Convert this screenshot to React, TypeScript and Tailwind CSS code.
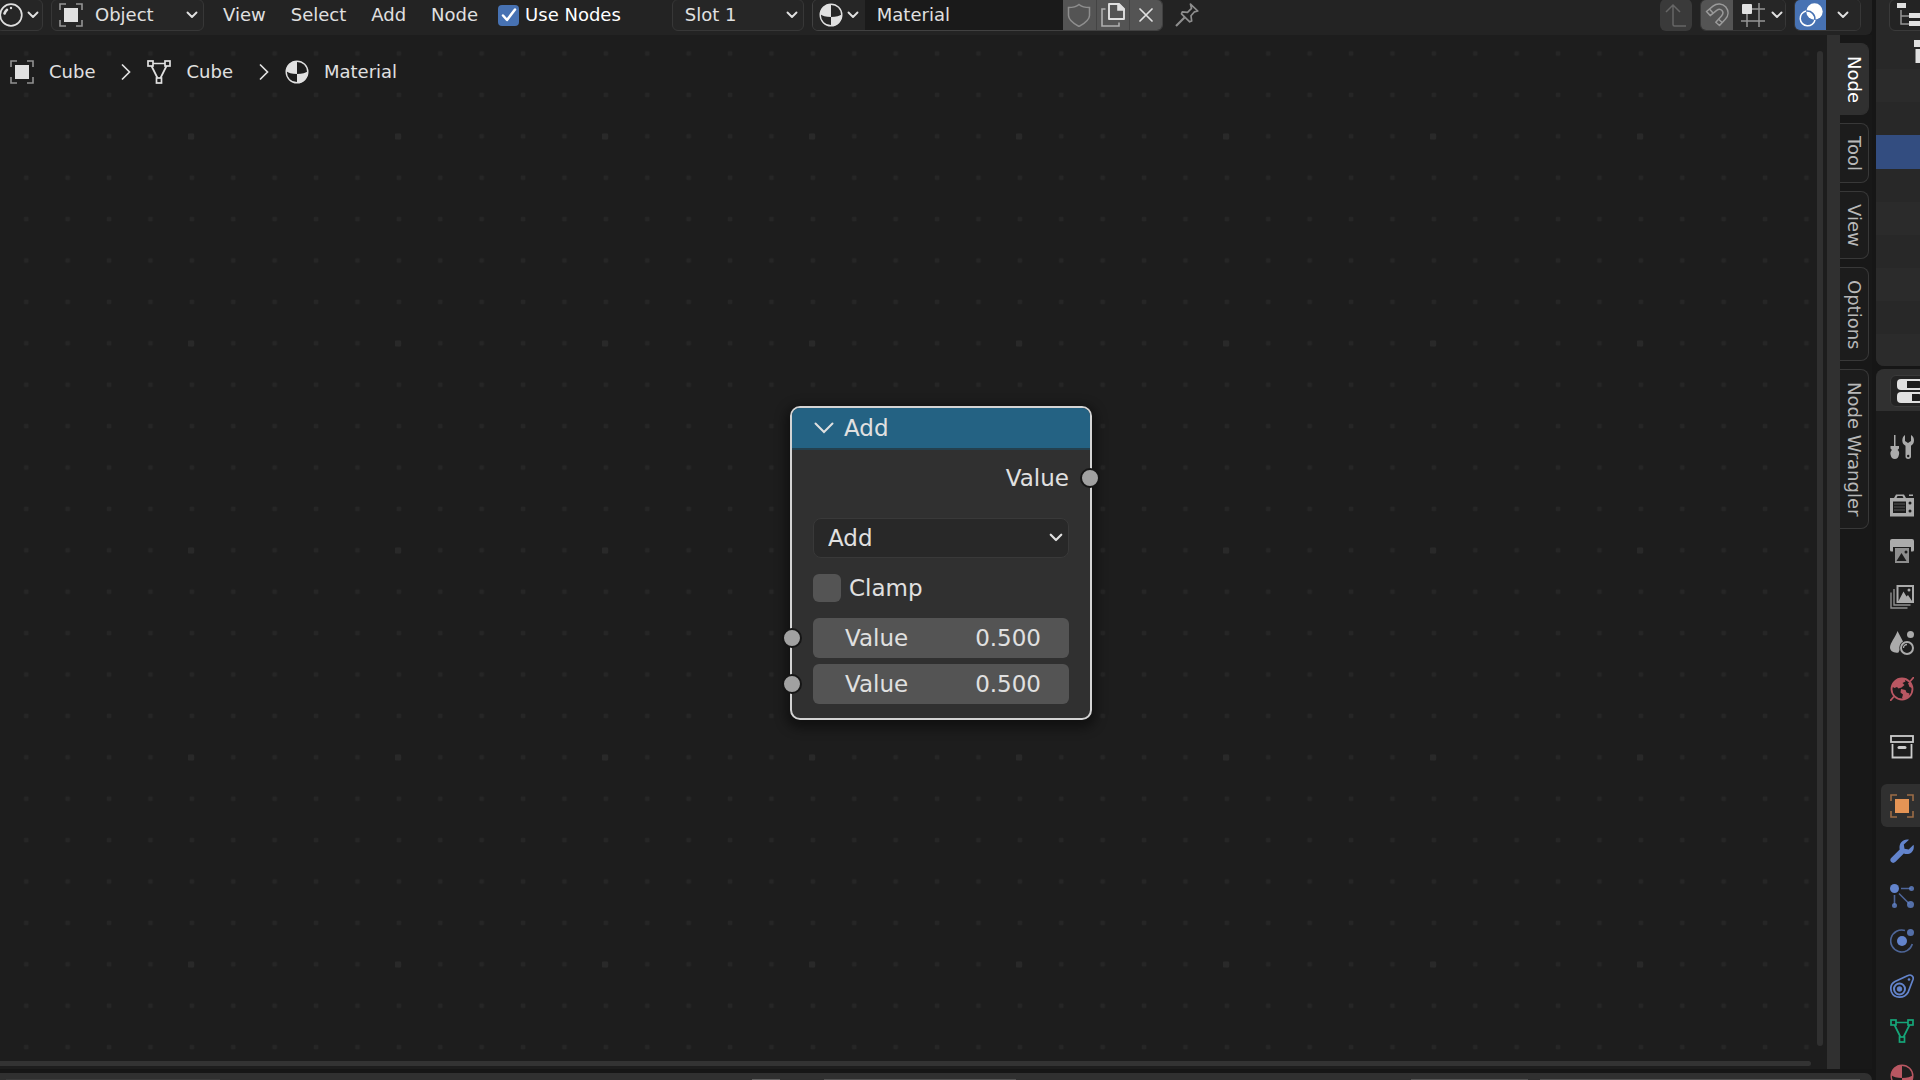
import React from 'react';

type IconProps = { className?: string };

const ObjectIcon: React.FC<IconProps> = ({ className = 'size-6' }) => (
  <svg viewBox="0 0 24 24" className={className} fill="none" aria-hidden="true">
    <path d="M1 7V1h6M17 1h6v6M23 17v6h-6M7 23H1v-6" stroke="currentColor" strokeWidth="1.6" opacity="0.6" />
    <rect x="5" y="5" width="14" height="14" fill="currentColor" />
  </svg>
);

const MeshIcon: React.FC<IconProps> = ({ className = 'size-6' }) => (
  <svg viewBox="0 0 24 24" className={className} fill="none" stroke="currentColor" strokeWidth="1.7" aria-hidden="true">
    <rect x="1" y="1" width="5" height="5" />
    <rect x="18" y="1" width="5" height="5" />
    <rect x="9.5" y="18" width="5" height="5" />
    <path d="M6 3.5h12M4.5 6l6 12M19.5 6l-6 12" />
  </svg>
);

const MaterialIcon: React.FC<IconProps> = ({ className = 'size-6' }) => (
  <svg viewBox="0 0 24 24" className={className} aria-hidden="true">
    <circle cx="12" cy="12" r="10.8" fill="none" stroke="currentColor" strokeWidth="1.4" />
    <path d="M12 1v13C7 14 3 13 1 11A11 11 0 0 1 12 1Z" fill="currentColor" />
    <path d="M12 23v-9c5 0 9-1 11-3A11 11 0 0 1 12 23Z" fill="currentColor" />
  </svg>
);

const ShaderIcon: React.FC<IconProps> = ({ className = 'size-6' }) => (
  <svg viewBox="0 0 24 24" className={className} fill="none" stroke="currentColor" strokeLinecap="round" aria-hidden="true">
    <circle cx="12" cy="12" r="10.8" strokeWidth="1.7" />
    <path d="M5.5 10.5c.5-1.500 1.300-2.700 2.500-3.700" strokeWidth="2.600" />
    <circle cx="12" cy="5" r="1.200" fill="currentColor" stroke="none" />
  </svg>
);

const ChevronDown: React.FC<IconProps> = ({ className = 'w-3' }) => (
  <svg viewBox="0 0 12 8" className={className} fill="none" aria-hidden="true">
    <path d="M1.500 1.500 6 6l4.500-4.500" stroke="currentColor" strokeWidth="1.900" strokeLinecap="round" strokeLinejoin="round" />
  </svg>
);

const ChevronRight: React.FC = () => (
  <svg viewBox="0 0 10 16" className="w-2.5 shrink-0" fill="none" aria-hidden="true">
    <path d="m1.500 1 7 7-7 7" stroke="currentColor" strokeWidth="1.700" strokeLinecap="round" />
  </svg>
);

const ShieldIcon: React.FC = () => (
  <svg viewBox="0 0 24 24" className="size-6" fill="none" stroke="currentColor" strokeWidth="1.500" aria-hidden="true">
    <path d="M12 1.500C9.500 3.500 6 4.500 1.500 4.500v8c0 4.500 5 8 10.500 11 5.500-3 10.500-6.500 10.500-11v-8C18 4.500 14.500 3.500 12 1.500Z" />
  </svg>
);

const DuplicateIcon: React.FC = () => (
  <svg viewBox="0 0 24 24" className="size-6" fill="none" stroke="currentColor" strokeWidth="1.600" aria-hidden="true">
    <path d="M4.500 6H1v17h17v-3.500" opacity="0.65" />
    <path d="M8 1h10l5 5v10H8Z" strokeLinejoin="round" strokeWidth="1.900" />
    <path d="M17 .5V7h6.500Z" fill="currentColor" />
  </svg>
);

const CloseIcon: React.FC = () => (
  <svg viewBox="0 0 14 14" className="size-3.5" fill="none" stroke="currentColor" strokeWidth="1.700" strokeLinecap="round" aria-hidden="true">
    <path d="m1 1 12 12M13 1 1 13" />
  </svg>
);

const PinIcon: React.FC = () => (
  <svg viewBox="0 0 24 24" className="size-6" fill="none" stroke="currentColor" strokeWidth="1.700" strokeLinejoin="round" aria-hidden="true">
    <path d="M15.500 1.200 22.800 8l-3.300.8-3.500 4 .7 5.200-2 .8-8.200-8 .8-2 5.200.5 4-4Z" />
    <path d="m9.500 14.500-8.500 8.500" strokeWidth="2.200" />
  </svg>
);

const ParentIcon: React.FC = () => (
  <svg viewBox="0 0 24 24" className="size-6" fill="none" stroke="currentColor" strokeWidth="1.500" aria-hidden="true">
    <path d="M2 9l7-7 7 7M9 2v19.500q0 1.500 1.500 1.500H22" />
  </svg>
);

const MagnetIcon: React.FC = () => (
  <svg viewBox="0 0 24 24" className="size-6" fill="none" stroke="currentColor" strokeWidth="1.500" strokeLinejoin="round" aria-hidden="true">
    <path d="M1.500 8.500 8 3.200C12 0 17.500.5 20.800 4c3.200 4 2.700 8.800-.5 12.300l-5.800 6.200-3.700-3.300 5.700-6.200c1.800-2 1.800-4 .5-5.500-1.400-1.500-3.500-1.500-5.300-.1l-6.500 5.200Z" />
    <path d="m4.500 6 3.500 4M13.500 16.200l3.700 3.300" />
  </svg>
);

const GridSnapIcon: React.FC = () => (
  <svg viewBox="0 0 24 24" className="size-6" fill="none" aria-hidden="true">
    <path d="M10 6h14M0 18h24M6 10v14M18 0v24" stroke="currentColor" strokeWidth="1.500" opacity="0.6" />
    <rect x="1" y="1" width="10" height="10" rx="1" fill="currentColor" />
  </svg>
);

const OverlayIcon: React.FC = () => (
  <svg viewBox="0 0 24 24" className="size-6" aria-hidden="true">
    <circle cx="15.500" cy="8.500" r="8.200" fill="currentColor" />
    <path d="M7 8a7.500 7.500 0 1 0 9 9" fill="none" stroke="currentColor" strokeWidth="1.500" />
    <path d="M7.200 8.200a7.600 7.600 0 0 1 8.600 8.600" fill="none" stroke="#4772b3" strokeWidth="1.500" />
  </svg>
);

const TreeIcon: React.FC = () => (
  <svg viewBox="0 0 24 24" className="size-6 shrink-0" aria-hidden="true">
    <path d="M4 7v14h8M4 13h8" fill="none" stroke="currentColor" strokeWidth="1.500" opacity="0.6" />
    <path d="M0 0h9v5H0ZM12 10h12v5H12ZM12 18h12v5H12Z" fill="currentColor" />
  </svg>
);

const CollectionIcon: React.FC<IconProps> = ({ className = 'size-6' }) => (
  <svg viewBox="0 0 24 24" className={className} fill="none" stroke="currentColor" strokeWidth="1.800" aria-hidden="true">
    <rect x="1" y="1" width="22" height="6" />
    <path d="M2.500 9v13.500h19V9" />
    <path d="M9 12.500h6" strokeWidth="3" strokeLinecap="round" />
  </svg>
);

const SceneCollectionIcon: React.FC = () => (
  <svg viewBox="0 0 24 24" className="size-6 shrink-0" fill="currentColor" aria-hidden="true">
    <path d="M0 0h24v7H0ZM1.500 9h21v14h-21Z" />
  </svg>
);

const PropertiesIcon: React.FC = () => (
  <svg viewBox="0 0 26 26" className="size-[26px] shrink-0" aria-hidden="true">
    <rect x="0" y="1" width="26" height="11" rx="4" fill="currentColor" />
    <rect x="0" y="14" width="26" height="11" rx="4" fill="currentColor" />
    <path d="M10 3h12q2 0 2 2v3q0 2-2 2H10ZM15 16h7q2 0 2 2v3q0 2-2 2h-7Z" fill="#1d1d1d" />
  </svg>
);

const ToolIcon: React.FC = () => (
  <svg viewBox="0 0 24 24" className="size-6" fill="currentColor" aria-hidden="true">
    <path d="M4 0h1.500v11H9v2.500L7.500 15c1.500 1 2 2.500 1.500 4.500C8.500 22.500 7 24 4.800 24S1 22.500.5 19.500C0 17.500.8 16 2 15L.5 13.500V11H4Z" />
    <path d="M15 0v6l3 2 3-2V0c2 1 3 3 3 5.500 0 2.500-1.300 4.200-3 5.200V21.500c0 1.500-1 2.500-2.800 2.500S15.500 23 15.500 21.500V10.700C13.500 9.700 12.300 8 12.300 5.500 12.300 3 13.300 1 15 0Z" />
    <circle cx="18.200" cy="21" r="1.200" fill="#1d1d1d" />
  </svg>
);

const RenderIcon: React.FC = () => (
  <svg viewBox="0 0 24 24" className="size-6" aria-hidden="true">
    <path d="M4 5l2-3.500h8L16 5h8v18.500H0V5Z" fill="currentColor" />
    <path d="M7.500 3h5L13.500 5h-7ZM3 8.500h13v11.500H3Z" fill="#1d1d1d" />
    <path d="M4 11h11M4 14h11M4 17h11" stroke="currentColor" strokeWidth="0.800" opacity="0.5" />
    <path d="M19 1.500h4v1.500h-4Z" fill="currentColor" />
    <circle cx="20" cy="10" r="1.500" fill="#1d1d1d" />
    <circle cx="20" cy="18" r="1.500" fill="#1d1d1d" />
  </svg>
);

const OutputIcon: React.FC = () => (
  <svg viewBox="0 0 24 24" className="size-6" aria-hidden="true">
    <path d="M2 0h20q2 0 2 2v9q0 1.500-1.500 1.500H21V8H3v4.500H1.500Q0 12.500 0 11V2Q0 0 2 0Z" fill="currentColor" />
    <path d="M5 9h14v15H5Z" fill="currentColor" opacity="0.8" />
    <path d="m6.500 22 5-8 5 8Z" fill="#1d1d1d" />
    <circle cx="16" cy="13" r="1.500" fill="#1d1d1d" />
  </svg>
);

const ViewLayerIcon: React.FC = () => (
  <svg viewBox="0 0 24 24" className="size-6" fill="none" stroke="currentColor" aria-hidden="true">
    <rect x="7.500" y="1" width="15.500" height="16" strokeWidth="2" />
    <path d="M4 4v16h16.500M1 7.500V23h16.500" strokeWidth="1.400" opacity="0.800" />
    <path d="m8.500 16 5-9.500 3 5 1.500-1.500 4 6Z" fill="currentColor" stroke="none" />
    <circle cx="19" cy="5" r="1.500" fill="currentColor" stroke="none" />
  </svg>
);

const SceneIcon: React.FC = () => (
  <svg viewBox="0 0 24 24" className="size-6" fill="currentColor" aria-hidden="true">
    <path d="M7.500 0 13 10.500C10 12.500 9 15 9.500 19L8.500 21.500C4 22.500 0 20 0 16.500 0 12 5.500 6 7.500 0Z" />
    <circle cx="20.500" cy="3.500" r="3.500" />
    <circle cx="17" cy="17" r="6" fill="none" stroke="currentColor" strokeWidth="2" />
    <path d="M13.500 17a3.500 3.500 0 0 1 3.500-3.500" fill="none" stroke="currentColor" strokeWidth="1.300" />
  </svg>
);

const WorldIcon: React.FC = () => (
  <svg viewBox="0 0 24 24" className="size-6" aria-hidden="true">
    <circle cx="12" cy="12" r="10.500" fill="none" stroke="currentColor" strokeWidth="1.800" />
    <path d="M3 6C6 2 11 1.200 14.500 2l1 2.500-3 1.500 2 2-3 2.500-3 1-1.500-1.500L4.500 11 2 9.500ZM11 12l4.500 1 1 2.500 3 1-1 3.500-4.500 2.500-2-1.500 1-3.500-2.500-2ZM18 6l3-1 1.500 6-3-1Z" fill="currentColor" />
    <path d="m0 24 4-4.500M20 4.500 24 0" stroke="currentColor" strokeWidth="1.800" />
  </svg>
);

const WrenchIcon: React.FC = () => (
  <svg viewBox="0 0 24 24" className="size-6" fill="currentColor" aria-hidden="true">
    <path d="M19 .8 13.800 5.500l.7 4.200 4.200.7L23.500 5.800c1.200 4-1 8.700-5.500 9.200-1.500.2-3-.1-4.200-.6L5.500 22.800c-1.500 1.500-3.200 1.400-4.300.3-1.300-1.200-1.200-3 .2-4.300L9.700 10.500C8.500 5 12.500-.5 19 .8Z" />
  </svg>
);

const ParticlesIcon: React.FC = () => (
  <svg viewBox="0 0 24 24" className="size-6" fill="currentColor" aria-hidden="true">
    <path d="M11 4.500h10M4.500 11v10M9 9.500l10.500 10.500" stroke="currentColor" strokeWidth="1.600" opacity="0.7" />
    <circle cx="4.500" cy="4.500" r="4.500" />
    <circle cx="21.500" cy="4.500" r="2.500" opacity="0.8" />
    <circle cx="4.500" cy="21.500" r="2.500" opacity="0.8" />
    <circle cx="20.500" cy="20.500" r="3.500" opacity="0.8" />
  </svg>
);

const PhysicsIcon: React.FC = () => (
  <svg viewBox="0 0 24 24" className="size-6" aria-hidden="true">
    <path d="M15 1.500A11 11 0 1 0 22.300 15" fill="none" stroke="currentColor" strokeWidth="1.600" opacity="0.7" />
    <circle cx="12" cy="12" r="5" fill="currentColor" />
    <circle cx="20.500" cy="3.500" r="3.500" fill="currentColor" opacity="0.8" />
  </svg>
);

const ConstraintIcon: React.FC = () => (
  <svg viewBox="0 0 24 24" className="size-6" fill="none" stroke="currentColor" aria-hidden="true">
    <path d="M18 1.500c3-1.500 6 1 5 4L18 18.500C14 25 4 24.500 1.500 18 0 13.500 1.500 9.500 5 7.500Z" strokeWidth="1.700" />
    <circle cx="9.500" cy="15" r="5.500" strokeWidth="2" />
    <circle cx="9.500" cy="15" r="2.300" fill="currentColor" />
    <circle cx="19" cy="5.500" r="1.300" fill="currentColor" stroke="none" />
  </svg>
);

const breadcrumbs = [
  { label: 'Cube', Icon: ObjectIcon },
  { label: 'Cube', Icon: MeshIcon },
  { label: 'Material', Icon: MaterialIcon },
];

const sidebarTabs = ['Node', 'Tool', 'View', 'Options', 'Node Wrangler'];

const sceneTabs = [
  { label: 'Render', Icon: RenderIcon, color: 'text-[#ababab]' },
  { label: 'Output', Icon: OutputIcon, color: 'text-[#ababab]' },
  { label: 'View Layer', Icon: ViewLayerIcon, color: 'text-[#ababab]' },
  { label: 'Scene', Icon: SceneIcon, color: 'text-[#ababab]' },
  { label: 'World', Icon: WorldIcon, color: 'text-[#b95762]' },
];

const objectTabs = [
  { label: 'Object', Icon: ObjectIcon, color: 'text-[#e59455]' },
  { label: 'Modifiers', Icon: WrenchIcon, color: 'text-[#6384cc]' },
  { label: 'Particles', Icon: ParticlesIcon, color: 'text-[#6384cc]' },
  { label: 'Physics', Icon: PhysicsIcon, color: 'text-[#6384cc]' },
  { label: 'Constraints', Icon: ConstraintIcon, color: 'text-[#6384cc]' },
  { label: 'Data', Icon: MeshIcon, color: 'text-[#16a679]' },
  { label: 'Material', Icon: MaterialIcon, color: 'text-[#b95762]' },
];

const EditorHeader: React.FC = () => (
  <header className="flex h-[35px] shrink-0 items-start overflow-hidden rounded-br-md bg-[#232323] pr-[11px]">
    <button aria-label="Editor type" className="-mt-px -ml-1 flex h-8 w-[47px] shrink-0 items-center gap-1 rounded-md border border-[#373737] bg-[#262626] pl-0.5">
      <ShaderIcon className="size-6 shrink-0" />
      <ChevronDown />
    </button>
    <div className="relative -mt-px ml-2 flex items-center">
      <ObjectIcon className="pointer-events-none absolute left-2 size-6" />
      <select aria-label="Shader type" className="h-8 w-[153px] appearance-none rounded-md border border-[#373737] bg-[#262626] pl-[43px]">
        <option>Object</option>
      </select>
      <ChevronDown className="pointer-events-none absolute right-1.5 w-3" />
    </div>
    <nav className="ml-[7px] flex h-[30px] gap-px">
      {['View', 'Select', 'Add', 'Node'].map((item) => (
        <button key={item} className="px-3">{item}</button>
      ))}
    </nav>
    <label className="ml-2 flex h-[30px] items-center gap-1.5 whitespace-nowrap text-white">
      <span className="relative flex items-center justify-center">
        <input type="checkbox" defaultChecked className="peer size-[21px] appearance-none rounded bg-[#545454] checked:bg-[#4772b3]" />
        <svg viewBox="0 0 16 16" className="pointer-events-none absolute size-4 opacity-0 peer-checked:opacity-100" fill="none" aria-hidden="true">
          <path d="m2 8.500 4 4.500 8-10.500" stroke="white" strokeWidth="2.500" strokeLinecap="round" strokeLinejoin="round" />
        </svg>
      </span>
      Use Nodes
    </label>
    <div className="relative -mt-px ml-[51px] flex items-center">
      <select aria-label="Material slot" className="h-8 w-[132px] appearance-none rounded-md border border-[#373737] bg-[#262626] pl-3">
        <option>Slot 1</option>
      </select>
      <ChevronDown className="pointer-events-none absolute right-1.5 w-3" />
    </div>
    <div className="-mt-px ml-2 flex h-8 overflow-hidden rounded-md border border-[#414141]">
      <button aria-label="Browse material" className="flex w-[52px] items-center gap-1 bg-[#262626] pl-1.5">
        <MaterialIcon className="size-6 shrink-0" />
        <ChevronDown />
      </button>
      <input aria-label="Material name" defaultValue="Material" className="w-[198px] bg-[#1a1a1a] pl-3 outline-none" />
      <button aria-label="Fake user" className="flex w-[33px] items-center justify-center bg-[#545454] text-[#8e8e8e]"><ShieldIcon /></button>
      <button aria-label="New material" className="flex w-[33px] items-center justify-center border-l border-[#444444] bg-[#545454]"><DuplicateIcon /></button>
      <button aria-label="Unlink material" className="flex w-[33px] items-center justify-center border-l border-[#444444] bg-[#545454]"><CloseIcon /></button>
    </div>
    <button aria-label="Pin" className="ml-3 flex h-[30px] items-center text-[#8e8e8e]"><PinIcon /></button>

    <div className="-mt-px ml-auto flex h-8 gap-2">
      <button aria-label="Go to parent node tree" className="flex w-8 items-center justify-center rounded-md bg-[#3a3a3a] text-[#666666]"><ParentIcon /></button>
      <div className="flex overflow-hidden rounded-md border border-[#373737]">
        <button aria-label="Snap" className="flex w-8 items-center justify-center bg-[#545454] text-[#9a9a9a]"><MagnetIcon /></button>
        <button aria-label="Snap target" className="flex w-[52px] items-center gap-1.5 bg-[#262626] pl-2">
          <GridSnapIcon />
          <ChevronDown className="w-3 shrink-0" />
        </button>
      </div>
      <div className="flex overflow-hidden rounded-md border border-[#373737]">
        <button aria-label="Overlays" className="flex w-[31px] items-center justify-center bg-[#4772b3] text-white"><OverlayIcon /></button>
        <button aria-label="Overlay options" className="flex w-[34px] items-center justify-center bg-[#262626]"><ChevronDown /></button>
      </div>
    </div>
  </header>
);

const GridDots: React.FC = () => (
  <svg className="absolute inset-0 size-full" aria-hidden="true">
    <defs>
      <pattern id="dots" x="5.500" y="-2.200" width="41.400" height="41.400" patternUnits="userSpaceOnUse">
        <rect x="18.500" y="18.500" width="4.500" height="4.500" rx="1" fill="#262626" />
      </pattern>
      <pattern id="major-dots" x="88" y="0" width="207" height="207" patternUnits="userSpaceOnUse">
        <rect x="100" y="98.500" width="6" height="6" rx="1" fill="#292929" />
      </pattern>
    </defs>
    <rect width="100%" height="100%" fill="url(#dots)" />
    <rect width="100%" height="100%" fill="url(#major-dots)" />
  </svg>
);

const Socket: React.FC<{ side: 'left' | 'right' }> = ({ side }) => (
  <span
    className={`absolute top-1/2 size-5 -translate-y-1/2 rounded-full border-2 border-[#161616] bg-[#a1a1a1] ${
      side === 'left' ? '-left-[31px]' : '-right-[31px]'
    }`}
  />
);

const ValueField: React.FC<{ id: string }> = ({ id }) => (
  <div className="relative">
    <div className="flex h-10 items-center justify-between rounded-md bg-[#545454] pr-7 pl-8">
      <label htmlFor={id}>Value</label>
      <input id={id} defaultValue="0.500" className="w-20 bg-transparent text-right outline-none" />
    </div>
    <Socket side="left" />
  </div>
);

const MathNode: React.FC = () => (
  <section className="absolute top-[371px] left-[790px] w-[302px] rounded-[10px] border-2 border-[#d4d4d4] bg-[#303030] text-[23px] leading-7 shadow-[0_4px_12px_4px_rgba(0,0,0,0.45)]">
    <h2 className="flex h-10 items-center gap-2.5 rounded-t-lg bg-[#246283] pl-[22px]">
      <button aria-label="Collapse node">
        <svg viewBox="0 0 20 12" className="w-5" fill="none" aria-hidden="true">
          <path d="m1.500 1.500 8.500 8.500 8.500-8.500" stroke="currentColor" strokeWidth="2" strokeLinecap="round" />
        </svg>
      </button>
      Add
    </h2>
    <div className="border-t-2 border-[#24404e] px-[21px] pb-3.5">
      <div className="relative flex h-14 items-center justify-end">
        Value
        <Socket side="right" />
      </div>
      <div className="relative mt-3 flex items-center">
        <select aria-label="Operation" className="h-10 w-full appearance-none rounded-lg border border-[#393939] bg-[#282828] pl-3.5">
          <option>Add</option>
        </select>
        <ChevronDown className="pointer-events-none absolute right-1.5 w-3.5" />
      </div>
      <label className="mt-2 flex h-11 items-center gap-2">
        <input type="checkbox" className="size-7 appearance-none rounded-md bg-[#545454] checked:bg-[#4772b3]" />
        Clamp
      </label>
      <div className="mt-2 grid gap-1.5">
        <ValueField id="value-a" />
        <ValueField id="value-b" />
      </div>
    </div>
  </section>
);

const NodeCanvas: React.FC = () => (
  <main className="relative min-w-0 flex-1 overflow-hidden bg-[#1d1d1d]">
    <GridDots />
    <ol className="relative flex items-center pt-[25px] pl-2.5">
      {breadcrumbs.map(({ label, Icon }, i) => (
        <li key={i} className="flex items-center">
          {i > 0 && (
            <span className="mr-4 ml-[26px] flex">
              <ChevronRight />
            </span>
          )}
          <Icon className="mr-[15px] size-6" />
          {label}
        </li>
      ))}
    </ol>
    <MathNode />
    <div className="absolute top-4 right-1 bottom-[23px] w-1.5 rounded-full bg-[#303030]" />
    <div className="absolute right-4 bottom-[3px] left-0 h-[5px] rounded-r-full bg-[#333333]" />
  </main>
);

const SidebarTabs: React.FC = () => (
  <aside className="flex shrink-0">
    <div className="w-[13px] bg-[#303030]" />
    <div className="flex w-8 flex-col items-start gap-2 bg-[#181818] pt-2">
      {sidebarTabs.map((tab, i) => (
        <button
          key={tab}
          className={`flex w-[29px] justify-center rounded-r-lg border border-l-0 pt-3 pb-[11px] ${
            i === 0 ? 'border-[#303030] bg-[#303030] text-white' : 'border-[#383838] bg-[#1c1c1c] text-[#b8b8b8]'
          }`}
        >
          <span className="[writing-mode:vertical-rl]">{tab}</span>
        </button>
      ))}
    </div>
  </aside>
);

const TimelineStrip: React.FC = () => (
  <footer className="flex h-[7px] shrink-0 items-end overflow-hidden rounded-tr-lg bg-[#303030]">
    <div className="ml-1.5 h-px w-[214px] bg-[#3c3c3c]" />
    <div className="ml-[532px] h-px w-7 bg-[#606060]" />
    <div className="ml-11 h-px w-48 bg-[#545454]" />
    <div className="ml-auto h-px w-[117px] bg-[#545454]" />
    <div className="mx-3 h-px w-80 bg-[#545454]" />
  </footer>
);

const Outliner: React.FC = () => (
  <section className="flex h-[366px] shrink-0 flex-col overflow-hidden rounded-bl-lg bg-[#282828]">
    <div className="h-[35px]">
      <button aria-label="Outliner" className="-mt-px ml-[13px] flex h-8 w-[60px] items-center rounded-md border border-[#3a3a3a] bg-[#232323] pl-[7px]">
        <TreeIcon />
      </button>
    </div>
    <div className="flex h-[34px] items-center pl-[38px]">
      <SceneCollectionIcon />
    </div>
    <div className="h-[33px] bg-[#2b2b2b]" />
    <div className="h-[33px]" />
    <div className="h-[34px] bg-[#334d80]" />
    <div className="h-[33px]" />
    <div className="h-[33px] bg-[#2b2b2b]" />
    <div className="h-[33px]" />
    <div className="h-[33px] bg-[#2b2b2b]" />
    <div className="h-[33px]" />
    <div className="flex-1 bg-[#2b2b2b]" />
  </section>
);

type TabProps = { label: string; Icon: React.FC<IconProps>; color: string; active?: boolean };

const PropertyTab: React.FC<TabProps> = ({ label, Icon, color, active }) => (
  <button
    aria-label={label}
    className={`ml-[5px] flex h-[43px] shrink-0 items-center rounded-l-md pl-[9px] ${color} ${active ? 'bg-[#303030]' : ''}`}
  >
    <Icon />
  </button>
);

const Properties: React.FC = () => (
  <section className="flex min-h-0 flex-1 flex-col overflow-hidden rounded-tl-lg bg-[#1d1d1d]">
    <div className="h-[42px] shrink-0 bg-[#303030] pt-1.5">
      <button aria-label="Properties" className="ml-3.5 flex h-8 w-[60px] items-center rounded-md border border-[#3a3a3a] bg-[#232323] pl-1.5">
        <PropertiesIcon />
      </button>
    </div>
    <div className="mt-3.5 flex flex-col">
      <PropertyTab label="Tool" Icon={ToolIcon} color="text-[#ababab]" />
    </div>
    <div className="mt-[15px] flex flex-col gap-[3px]">
      {sceneTabs.map((tab) => (
        <PropertyTab key={tab.label} {...tab} />
      ))}
    </div>
    <div className="mt-[15px] flex flex-col">
      <PropertyTab label="Collection" Icon={CollectionIcon} color="text-[#cccccc]" />
    </div>
    <div className="mt-4 flex min-h-0 flex-col gap-0.5">
      {objectTabs.map((tab, i) => (
        <PropertyTab key={tab.label} {...tab} active={i === 0} />
      ))}
    </div>
  </section>
);

const App: React.FC = () => {
  return (
    <div className="flex h-screen gap-1 overflow-hidden bg-[#161616] font-['DejaVu_Sans',sans-serif] text-lg leading-6 text-[#e0e0e0]">
      <div className="flex min-w-0 flex-1 flex-col">
        <EditorHeader />
        <div className="flex min-h-0 flex-1">
          <NodeCanvas />
          <SidebarTabs />
        </div>
        <div className="h-1 shrink-0" />
        <TimelineStrip />
      </div>
      <div className="flex w-11 shrink-0 flex-col gap-[3px] overflow-hidden">
        <Outliner />
        <Properties />
      </div>
    </div>
  );
};

export default App;
